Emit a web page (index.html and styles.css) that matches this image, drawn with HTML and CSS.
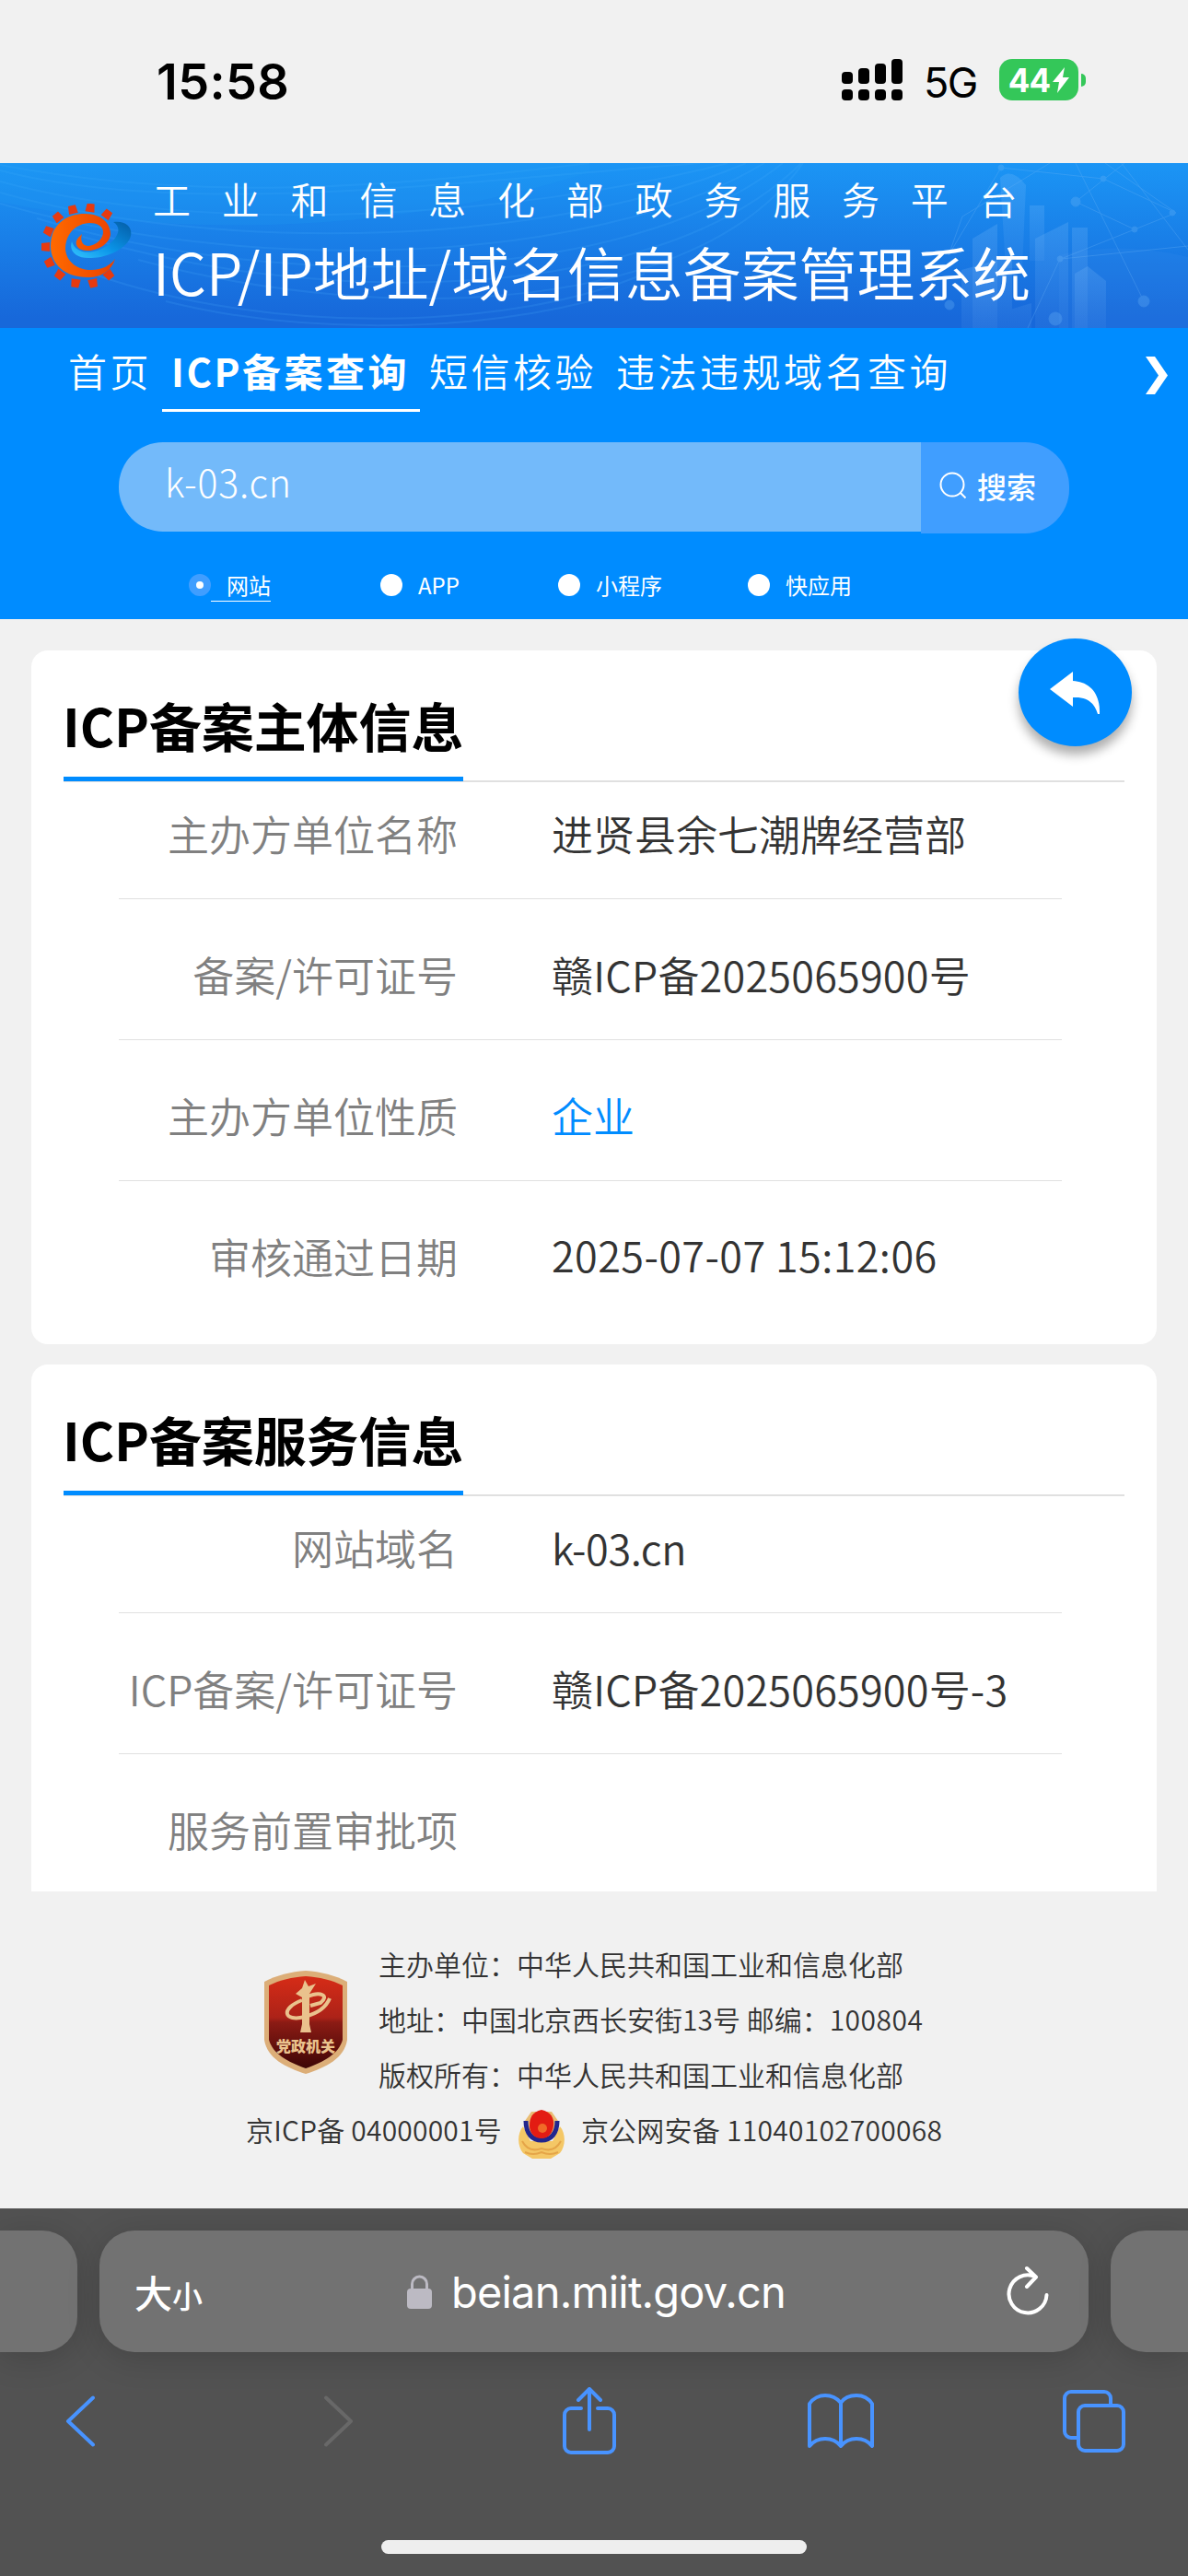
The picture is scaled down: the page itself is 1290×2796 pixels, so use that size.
FILE: index.html
```html
<!DOCTYPE html>
<html lang="zh-CN">
<head>
  <meta charset="UTF-8">
  <title>ICP/IP地址/域名信息备案管理系统</title>
  <link rel="stylesheet" href="styles.css">
</head>
<body>
  <div class="status-bar">
    <span class="time">15:58</span>
    <div class="status-right">
      <svg class="signal" width="66" height="46" viewBox="0 0 66 46">
        <rect x="0" y="14" width="12" height="13" rx="4"/>
        <rect x="18" y="10" width="12" height="17" rx="4"/>
        <rect x="36" y="5" width="12" height="22" rx="4"/>
        <rect x="54" y="0" width="12" height="27" rx="4"/>
        <rect x="0" y="33" width="12" height="12" rx="4"/>
        <rect x="18" y="33" width="12" height="12" rx="4"/>
        <rect x="36" y="33" width="12" height="12" rx="4"/>
        <rect x="54" y="33" width="12" height="12" rx="4"/>
      </svg>
      <span class="network">5G</span>
      <div class="battery">
        <span>44</span>
        <svg width="18" height="28" viewBox="0 0 18 28"><path d="M13 0 0 16h7L5 28l13-17h-7z" fill="#fff"/></svg>
      </div>
      <i class="battery-cap"></i>
    </div>
  </div>

  <header class="banner">
    <svg class="banner-bg" width="1290" height="179" viewBox="0 0 1290 179">
      <defs>
        <linearGradient id="pillar" x1="0" y1="0" x2="0" y2="1">
          <stop offset="0" stop-color="#8cc4fb" stop-opacity=".2"/>
          <stop offset="1" stop-color="#8cc4fb" stop-opacity=".07"/>
        </linearGradient>
      </defs>
      <g class="waves">
        <path d="M0 8C200 60 500 20 760 0M0 20C220 80 560 60 790 0M0 32C240 100 600 90 810 0M0 44C260 120 640 115 830 0M40 60C300 140 680 135 850 0M90 80C360 160 720 150 870 0M150 105C430 180 760 160 872 0"/>
        <path d="M0 2C200 40 400 30 640 0M100 120C300 190 560 180 700 120M180 150C320 185 500 185 640 150"/>
      </g>
      <path d="M0 42C180 80 420 80 640 10V0H0z" fill="#23a2f6" opacity=".18"/>
      <path d="M1150 100C1200 88 1250 92 1290 102V179H1150z" fill="#3f8fea" opacity=".16"/>
      <g fill="url(#pillar)">
        <path d="M1086 16q12-12 28 8l-4 90h-18z"/>
        <path d="M1056 82l27-16v113h-27z"/>
        <path d="M1118 46h16v60h-16z"/>
        <path d="M1124 82l36-18v115h-36z"/>
        <path d="M1164 70h17v109h-17z"/>
        <path d="M1167 120l14-8 20 16v51h-34z"/>
        <path d="M1044 116l55-15v78h-55zM1080 164l40-12v27h-40z"/>
      </g>
      <g class="net">
        <path d="M1087 5L1030 100L1045 58L1140 0M1087 5L1198 17L1277 54L1200 0M1168 42L1232 72L1152 104L1290 90M1168 0L1242 150M1221 0L1168 42M1232 72L1277 54M1290 94L1210 -10M1151 104L1116 179"/>
        <circle cx="1087" cy="5" r="3"/><circle cx="1198" cy="17" r="3"/><circle cx="1168" cy="42" r="5"/><circle cx="1232" cy="72" r="3"/><circle cx="1273" cy="54" r="3"/><circle cx="1242" cy="150" r="6"/><circle cx="1031" cy="154" r="5"/><circle cx="1146" cy="169" r="7"/><circle cx="1151" cy="104" r="3"/>
      </g>
    </svg>
    <svg class="logo" width="98" height="92" viewBox="0 0 98 92">
      <defs>
        <linearGradient id="blue" x1="0" y1="1" x2="1" y2="0">
          <stop offset="0" stop-color="#34c3fd"/><stop offset=".45" stop-color="#0a94e8"/><stop offset="1" stop-color="#045ca6"/>
        </linearGradient>
        <linearGradient id="orange" x1="0" y1="0" x2="1" y2="0">
          <stop offset="0" stop-color="#ff6a00"/><stop offset="1" stop-color="#ea4200"/>
        </linearGradient>
      </defs>
      <path d="M78 20C91 18 99 25 97 35C94 48 72 59 54 59C39 60 29 52 33 41C36 51 46 54 56 52C74 49 93 29 78 20z" fill="url(#blue)"/>
      <path d="M80 60C76 74 62 81 50 80C26 80 10 66 10 46C10 24 26 11 47 11C66 11 75 22 75 33C74 44 61 51 50 51C38 51 35 43 40 37L44 33C42 40 44 45 50 46C58 46 67 39 67 31C67 24 60 21 52 21C36 22 26 34 26 49C27 64 40 72 54 72C66 72 75 67 80 60z" fill="url(#orange)"/>
      <g fill="#e63a10">
        <path d="M-4-5h8l1 9H-5z" transform="translate(34 7) rotate(-13)"/>
        <path d="M-4-5h8l1 9H-5z" transform="translate(53 5) rotate(8)"/>
        <path d="M-4-5h8l1 9H-5z" transform="translate(71 12) rotate(36)"/>
        <path d="M-4-5h8l1 9H-5z" transform="translate(18 15) rotate(-39)"/>
        <path d="M-4-5h8l1 9H-5z" transform="translate(8 30) rotate(-66)"/>
        <path d="M-4-5h8l1 9H-5z" transform="translate(5 47) rotate(-90)"/>
        <path d="M-4-5h8l1 9H-5z" transform="translate(9 64) rotate(-117)"/>
        <path d="M-4-5h8l1 9H-5z" transform="translate(20 77) rotate(-143)"/>
        <path d="M-4-5h8l1 9H-5z" transform="translate(37 86) rotate(-171)"/>
        <path d="M-4-5h8l1 9H-5z" transform="translate(56 86) rotate(168)"/>
        <path d="M-4-5h8l1 9H-5z" transform="translate(73 77) rotate(140)"/>
      </g>
    </svg>
    <div class="banner-text">
      <div class="platform">工业和信息化部政务服务平台</div>
      <div class="system">ICP/IP地址/域名信息备案管理系统</div>
    </div>
  </header>

  <div class="top">
    <nav class="menu">
      <a>首页</a>
      <a class="active"><span>ICP</span>备案查询</a>
      <a class="sms">短信核验</a>
      <a>违法违规域名查询</a>
      <svg class="next" width="24" height="41" viewBox="0 0 24 41"><path d="M0 0h10l14 20.500-14 20.500H0l14-20.500z" fill="#fff"/></svg>
    </nav>
    <div class="search">
      <div class="search-input">k-03.cn</div>
      <div class="search-btn">
        <svg width="30" height="30" viewBox="0 0 30 30" fill="none" stroke="#fff" stroke-width="2"><circle cx="14" cy="14" r="12.500"/><path d="M22.500 22.500l6 6"/></svg>
        搜索
      </div>
    </div>
    <div class="types">
      <div class="type checked"><i></i><span>网站</span></div>
      <div class="type"><i></i><span>APP</span></div>
      <div class="type"><i></i><span>小程序</span></div>
      <div class="type"><i></i><span>快应用</span></div>
    </div>
  </div>

  <main class="content">
    <section class="card">
      <div class="card-title"><h2>ICP备案主体信息</h2></div>
      <div class="rows">
        <div class="row"><label>主办方单位名称</label><p>进贤县余七潮牌经营部</p></div>
        <div class="row"><label>备案/许可证号</label><p class="number">赣ICP备2025065900号</p></div>
        <div class="row"><label>主办方单位性质</label><p class="blue">企业</p></div>
        <div class="row"><label>审核通过日期</label><p class="number date">2025-07-07 15:12:06</p></div>
      </div>
      <div class="back">
        <svg width="56" height="46" viewBox="0 0 56 46"><path d="M25 0v10C42 11 55 22 54 46H52C48 33 40 27 25 28v10L0 19z" fill="#fff"/></svg>
      </div>
    </section>
    <section class="card service">
      <div class="card-title"><h2>ICP备案服务信息</h2></div>
      <div class="rows">
        <div class="row"><label>网站域名</label><p class="domain">k-03.cn</p></div>
        <div class="row"><label>ICP备案/许可证号</label><p class="number">赣ICP备2025065900号-3</p></div>
        <div class="row"><label>服务前置审批项</label><p></p></div>
      </div>
    </section>
  </main>

  <footer class="footer">
    <div class="sponsor">
      <svg class="shield" width="92" height="114" viewBox="0 0 92 114">
        <defs>
          <linearGradient id="red" x1="0" y1="0" x2="0" y2="1">
            <stop offset="0" stop-color="#d62c17"/><stop offset=".45" stop-color="#ac2218"/><stop offset=".5" stop-color="#8c1b14"/><stop offset="1" stop-color="#3d0606"/>
          </linearGradient>
        </defs>
        <path d="M46 1C62 2 78 6 91 13V76C88 96 68 106 46 113C24 106 4 96 1 76V13C14 6 30 2 46 1z" fill="#dcae78"/>
        <path d="M46 7C61 8 74 11 86 17V76C82 91 66 100 46 107C26 100 10 91 6 76V17C18 11 31 8 46 7z" fill="url(#red)"/>
        <path d="M45 11l4 7 8-3-7 11v33l2 9H40l2-9V30l-7-4 7-6z" fill="#eac28d"/>
        <path d="M48 29C62 23 72 28 62 36L51 39M42 33C18 42 22 57 45 51C60 47 68 41 72 31" fill="none" stroke="#eac28d" stroke-width="4"/>
        <text x="46" y="89" text-anchor="middle">党政机关</text>
      </svg>
      <div class="sponsor-text">
        <p>主办单位：中华人民共和国工业和信息化部</p>
        <p>地址：中国北京西长安街13号 邮编：<span>100804</span></p>
        <p>版权所有：中华人民共和国工业和信息化部</p>
      </div>
    </div>
    <div class="records">
      <span class="icp-no">京ICP备 04000001号</span>
      <svg class="police" width="52" height="56" viewBox="0 0 52 56">
        <path d="M6 20C-1 28 0 42 6 49L16 55H36L46 49C52 42 53 28 46 20L38 36H14z" fill="#f4c766"/>
        <path d="M5 36q7 13 21 8q14 5 21-8M8 48q9 4 18 0q9 4 18 0" fill="none" stroke="#e5a548" stroke-width="2"/>
        <path d="M15 4h22l7 10-5 16-13 8-13-8-5-16z" fill="#e9bd74"/>
        <path d="M9 14C9 28 16 35 26 35S43 28 43 14" fill="none" stroke="#22268d" stroke-width="5"/>
        <path d="M26 2C36 4 40 11 39 19S34 33 26 33S13 27 13 19S16 4 26 2z" fill="#e31c13"/>
        <circle cx="27" cy="22" r="5" fill="#f06a28"/>
      </svg>
      <span class="police-no">京公网安备 11040102700068</span>
    </div>
  </footer>

  <div class="browser">
    <div class="tabs">
      <div class="tab side"></div>
      <div class="tab address">
        <span class="text-size">大<small>小</small></span>
        <div class="url">
          <svg width="27" height="37" viewBox="0 0 27 37"><path d="M5.500 17V10a8 8 0 0 1 16 0v7" fill="none" stroke="#bcbac3" stroke-width="3"/><rect x="0" y="15" width="27" height="22" rx="4" fill="#bcbac3"/></svg>
          <span>beian.miit.gov.cn</span>
        </div>
        <svg class="reload" width="46" height="56" viewBox="0 0 46 56" fill="none" stroke="#fff" stroke-width="4" stroke-linecap="round" stroke-linejoin="round"><path d="M31 12A20.500 20.500 0 1 0 43.500 32M22 3l10 9.500L22 23"/></svg>
      </div>
      <div class="tab side"></div>
    </div>
    <div class="tools">
      <svg width="32" height="56" viewBox="0 0 32 56"><path d="M30 2.500L3 28l27 25.500"/></svg>
      <svg class="disabled" width="32" height="56" viewBox="0 0 32 56"><path d="M2 2.500L29 28 2 53.500"/></svg>
      <svg width="58" height="74" viewBox="0 0 58 74"><path d="M20 23H9a7 7 0 0 0-7 7v34a7 7 0 0 0 7 7h40a7 7 0 0 0 7-7V30a7 7 0 0 0-7-7H38M29 46V3M17 14L29 2l12 12"/></svg>
      <svg width="72" height="60" viewBox="0 0 72 60"><path d="M36 10C31 4 25 2 19 2S6 5 2 11v46c4-5 10-8 17-8s13 3 17 8c4-5 10-8 17-8s13 3 17 8V11C66 5 60 2 53 2S40 4 36 10zV57"/></svg>
      <svg width="68" height="68" viewBox="0 0 68 68"><path d="M16 52H9a7 7 0 0 1-7-7V9a7 7 0 0 1 7-7h36a7 7 0 0 1 7 7v7"/><rect x="17" y="17" width="49" height="49" rx="7"/></svg>
    </div>
    <div class="home-indicator"></div>
  </div>
</body>
</html>
```

FILE: styles.css
```css
* {
  box-sizing: border-box;
}
body {
  margin: 0;
  width: 1290px;
  height: 2796px;
  overflow: hidden;
  display: flex;
  flex-direction: column;
  background: #f1f1f1;
  color: #333;
  font-family: "Noto Sans CJK SC", sans-serif;
  font-weight: 350;
}
p, h2 {
  margin: 0;
}
svg {
  display: block;
  flex: none;
}

/* status bar */
.status-bar {
  height: 177px;
  padding: 0 111px 0 170px;
  display: flex;
  justify-content: space-between;
  font-family: Inter, sans-serif;
  color: #000;
}
.time {
  margin-top: 54px;
  font-size: 54px;
  line-height: 69px;
  font-weight: 600;
  letter-spacing: .3px;
}
.status-right {
  display: flex;
  padding-top: 64px;
}
.network {
  margin-left: 23px;
  width: 60px;
  font-size: 45px;
  line-height: 51px;
  font-weight: 400;
  letter-spacing: -1.500px;
}
.battery {
  margin-left: 22px;
  width: 86px;
  height: 45px;
  border-radius: 14px;
  background: #34c759;
  color: #fff;
  display: flex;
  align-items: center;
  justify-content: center;
  gap: 3px;
  font-size: 35px;
  font-weight: 700;
  letter-spacing: -1px;
}
.battery-cap {
  margin: 16px 0 0 3px;
  width: 5px;
  height: 14px;
  border-radius: 0 5px 5px 0;
  background: #34c759;
}

/* banner */
.banner {
  position: relative;
  height: 179px;
  padding-left: 45px;
  display: flex;
  background: linear-gradient(#1b95f5, #1768da 94%);
  color: #fff;
}
.banner-bg {
  position: absolute;
  left: 0;
  top: 0;
}
.waves {
  fill: none;
  stroke: #4fb4ff;
  stroke-width: 2;
  opacity: .16;
}
.net {
  fill: #6db5f7;
  stroke: #6db5f7;
  opacity: .3;
}
.net path {
  fill: none;
}
.logo {
  position: relative;
  margin-top: 44px;
}
.banner-text {
  position: relative;
  margin-left: 23px;
  padding-top: 9px;
  white-space: nowrap;
}
.platform {
  font-size: 41px;
  line-height: 59px;
  letter-spacing: 33.800px;
}
.system {
  font-size: 62.900px;
  line-height: 97px;
}

/* menu and search */
.top {
  height: 316px;
  background: #008cff;
  color: #fff;
}
.menu {
  height: 91px;
  padding: 0 22px 0 74px;
  display: flex;
  font-size: 42px;
  line-height: 92px;
  letter-spacing: 3.500px;
  white-space: nowrap;
}
.menu a {
  margin-right: 9px;
}
.menu .active {
  padding: 0 11px 0 10px;
  margin-left: 2px;
  border-bottom: 3px solid #fff;
  font-weight: 700;
}
.active span {
  letter-spacing: 2.500px;
}
.menu .sms {
  margin: 0 21px 0 1px;
}
.next {
  margin: 31px 0 0 auto;
}
.search {
  margin: 33px 129px 0;
  height: 99px;
  display: flex;
  align-items: flex-start;
}
.search-input {
  width: 871px;
  height: 97px;
  padding-left: 50px;
  border-radius: 48px 0 0 48px;
  background: #73bafa;
  font-size: 41px;
  font-weight: 300;
  line-height: 84px;
  letter-spacing: .8px;
}
.search-btn {
  flex: 1;
  height: 99px;
  padding: 0 0 5px 20px;
  border-radius: 0 48px 48px 0;
  background: #409eff;
  display: flex;
  align-items: center;
  gap: 11px;
  font-size: 32px;
  font-weight: 500;
}
.types {
  height: 75px;
  margin-top: 20px;
  padding-left: 205px;
  display: grid;
  grid-template-columns: 208px 193px 206px 130px;
  font-size: 24px;
  font-weight: 400;
}
.type {
  display: flex;
  align-items: center;
  height: 72px;
}
.type i {
  width: 24px;
  height: 24px;
  border-radius: 50%;
  background: #fff;
}
.type span {
  padding-left: 17px;
  line-height: 35px;
  border-bottom: 1px solid transparent;
}
.type.checked i {
  border: 8px solid #409eff;
}
.type.checked span {
  border-color: #fff;
}

/* cards */
.content {
  padding: 34px 34px 0;
  height: 1381px;
}
.card {
  position: relative;
  height: 753px;
  padding: 0 35px;
  border-radius: 18px;
  background: #fff;
}
.card.service {
  margin-top: 22px;
  height: 572px;
  border-radius: 18px 18px 0 0;
}
.card-title {
  height: 143px;
  display: flex;
  border-bottom: 2px solid #e0e0e0;
}
.card-title h2 {
  height: 142px;
  border-bottom: 5px solid #008cff;
  color: #000;
  font-size: 57px;
  line-height: 160px;
  letter-spacing: -.1px;
  text-indent: -1px;
  white-space: nowrap;
}
.rows {
  padding: 0 68px 0 60px;
  margin-top: -26px;
}
.row {
  height: 153px;
  border-bottom: 1px solid #e0e0e0;
  display: flex;
  font-size: 45px;
  line-height: 163px;
  white-space: nowrap;
}
.row:last-child {
  border: none;
}
.row label {
  width: 368px;
  margin-right: 102px;
  display: flex;
  justify-content: flex-end;
  color: #808080;
}
.row .number {
  letter-spacing: .2px;
}
.row .date {
  letter-spacing: .4px;
  line-height: 160px;
}
.row .blue {
  color: #008cff;
}
.row .domain {
  letter-spacing: -.4px;
}
.back {
  position: absolute;
  right: 27px;
  top: -13px;
  width: 123px;
  height: 117px;
  border-radius: 50%;
  background: #008cff;
  box-shadow: 0 9px 12px rgba(0, 0, 0, .32);
  display: flex;
  align-items: center;
  justify-content: center;
}

/* footer */
.footer {
  height: 344px;
  padding-top: 48px;
  font-size: 30px;
  line-height: 60px;
  white-space: nowrap;
}
.sponsor {
  display: flex;
  padding-left: 286px;
}
.shield {
  margin-top: 37px;
}
.shield text {
  fill: #eac28d;
  font-size: 16px;
  font-weight: 900;
}
.sponsor-text {
  margin-left: 33px;
}
.sponsor-text span {
  letter-spacing: .5px;
}
.records {
  display: flex;
  padding-left: 267px;
}
.icp-no {
  letter-spacing: .2px;
}
.police {
  margin: 7px 17px 0;
}
.police-no {
  letter-spacing: .25px;
}

/* browser bar */
.browser {
  height: 399px;
  background: #525252;
  overflow: hidden;
}
.tabs {
  padding-top: 24px;
  display: flex;
  gap: 24px;
}
.tab {
  height: 132px;
  border-radius: 38px;
  background: #727272;
  box-shadow: 0 6px 36px rgba(0, 0, 0, .16);
}
.side {
  width: 84px;
}
.side:first-child {
  border-radius: 0 38px 38px 0;
}
.side:last-child {
  border-radius: 38px 0 0 38px;
}
.address {
  width: 1074px;
  padding: 0 43px 0 38px;
  display: flex;
  align-items: center;
  justify-content: space-between;
  color: #fff;
}
.text-size {
  width: 76px;
  font-size: 41px;
  font-weight: 500;
  white-space: nowrap;
}
.text-size small {
  font-size: 33px;
}
.url {
  margin-right: 20px;
  display: flex;
  align-items: center;
  gap: 21px;
  font-family: Inter, sans-serif;
  font-size: 47px;
  font-weight: 400;
  letter-spacing: -.8px;
}
.tools {
  height: 140px;
  margin-top: 5px;
  padding: 0 69px 0 71px;
  display: grid;
  grid-template-columns: 281px 259px 266px 277px 68px;
  align-items: center;
  fill: none;
  stroke: #4893ff;
  stroke-width: 4;
  stroke-linecap: round;
  stroke-linejoin: round;
}
.disabled {
  stroke: #686868;
}
.home-indicator {
  width: 462px;
  height: 15px;
  margin: 59px auto 0;
  border-radius: 8px;
  background: #eee;
}
```
